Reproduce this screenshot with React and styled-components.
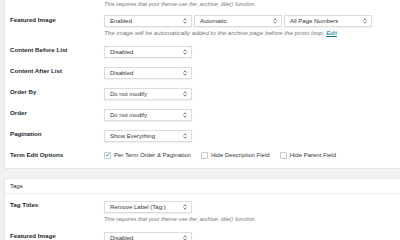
import React from "react";
import styled, { createGlobalStyle } from "styled-components";

const Global = createGlobalStyle`
  html, body { margin: 0; padding: 0; background: #f1f1f1; }
  body { font-family: "Liberation Sans", Arial, sans-serif; color: #23282d; overflow: hidden; }
  * { box-sizing: border-box; }
`;

const Page = styled.div`
  width: 400px;
  height: 240px;
  overflow: hidden;
  padding-left: 4px;
  display: flex;
  flex-direction: column;
  gap: 9px;
`;

const Panel = styled.div`
  background: #fff;
  border: 1px solid #e5e5e5;
  border-right: none;
  border-top: ${(p) => (p.$open ? "none" : "1px solid #e5e5e5")};
  padding-bottom: ${(p) => p.$pb || 0}px;
  flex-shrink: 0;
`;

const PanelHeader = styled.div`
  padding: 3px 5px 3px;
  font-size: 6px;
  line-height: 8px;
  color: #23282d;
  border-bottom: 1px solid #eee;
`;

const Row = styled.div`
  display: flex;
  align-items: flex-start;
  padding: ${(p) => p.$pt ?? 5}px 0 4px;
`;

const Label = styled.div`
  width: 99px;
  flex-shrink: 0;
  padding-left: 5px;
  font-size: 6.2px;
  line-height: 8px;
  font-weight: 700;
  color: #23282d;
  margin-top: ${(p) => p.$mt ?? 0}px;
`;

const Field = styled.div`
  display: flex;
  flex-direction: column;
`;

const Selects = styled.div`
  display: flex;
  gap: 2px;
`;

const SelectBox = styled.div`
  width: 88px;
  height: 12px;
  border: 1px solid #dcdcdc;
  box-shadow: 0 1px 1px rgba(0, 0, 0, 0.05);
  background: #fff;
  display: flex;
  align-items: center;
  justify-content: space-between;
  padding: 0 4px 0 5px;
  font-size: 6px;
  color: #32373c;
`;

const Desc = styled.div`
  margin-top: ${(p) => p.$mt ?? 2}px;
  font-size: ${(p) => p.$fs ?? 5.6}px;
  line-height: 8px;
  font-style: italic;
  color: #777;
  white-space: nowrap;
  a { color: #0073aa; text-decoration: underline; }
`;

const TopDesc = styled(Desc)`
  margin: 0 0 0 99px;
`;

const Checks = styled.div`
  display: flex;
  align-items: center;
  gap: 10px;
  height: 8px;
`;

const CheckItem = styled.label`
  display: flex;
  align-items: center;
  gap: 3px;
  font-size: 6px;
  color: #32373c;
  white-space: nowrap;
`;

const Box = styled.span`
  width: 7px;
  height: 7px;
  border: 1px solid #cfcfcf;
  background: #fff;
  display: flex;
  align-items: center;
  justify-content: center;
`;

const Arrows = () => (
  <svg width="4" height="6" viewBox="0 0 4 6">
    <path d="M0.6 2.4 L2 0.8 L3.4 2.4" fill="none" stroke="#555" strokeWidth="0.8" />
    <path d="M0.6 3.6 L2 5.2 L3.4 3.6" fill="none" stroke="#555" strokeWidth="0.8" />
  </svg>
);

const Select = ({ children }) => (
  <SelectBox>
    <span>{children}</span>
    <Arrows />
  </SelectBox>
);

const Check = ({ checked, children }) => (
  <CheckItem>
    <Box>
      {checked && (
        <svg width="6" height="6" viewBox="0 0 6 6">
          <path d="M1 3 L2.5 4.5 L5.2 1" fill="none" stroke="#1e8cbe" strokeWidth="1.1" />
        </svg>
      )}
    </Box>
    {children}
  </CheckItem>
);

export default function App() {
  return (
    <>
      <Global />
      <Page>
        <Panel $open $pb={5}>
          <TopDesc>This requires that your theme use the_archive_title() function.</TopDesc>
          <Row $pt={7}>
            <Label $mt={1}>Featured Image</Label>
            <Field>
              <Selects>
                <Select>Enabled</Select>
                <Select>Automatic</Select>
                <Select>All Page Numbers</Select>
              </Selects>
              <Desc $fs={6.2}>
                The image will be automatically added to the archive page before the posts loop. <a>Edit</a>
              </Desc>
            </Field>
          </Row>
          <Row>
            <Label>Content Before List</Label>
            <Select>Disabled</Select>
          </Row>
          <Row>
            <Label>Content After List</Label>
            <Select>Disabled</Select>
          </Row>
          <Row>
            <Label>Order By</Label>
            <Select>Do not modify</Select>
          </Row>
          <Row>
            <Label>Order</Label>
            <Select>Do not modify</Select>
          </Row>
          <Row>
            <Label>Pagination</Label>
            <Select>Show Everything</Select>
          </Row>
          <Row>
            <Label>Term Edit Options</Label>
            <Checks>
              <Check checked>Per Term Order &amp; Pagination</Check>
              <Check>Hide Description Field</Check>
              <Check>Hide Parent Field</Check>
            </Checks>
          </Row>
        </Panel>
        <Panel>
          <PanelHeader>Tags</PanelHeader>
          <Row $pt={7}>
            <Label>Tag Titles</Label>
            <Field>
              <Select>Remove Label (Tag:)</Select>
              <Desc>This requires that your theme use the_archive_title() function.</Desc>
            </Field>
          </Row>
          <Row>
            <Label>Featured Image</Label>
            <Select>Disabled</Select>
          </Row>
        </Panel>
      </Page>
    </>
  );
}
